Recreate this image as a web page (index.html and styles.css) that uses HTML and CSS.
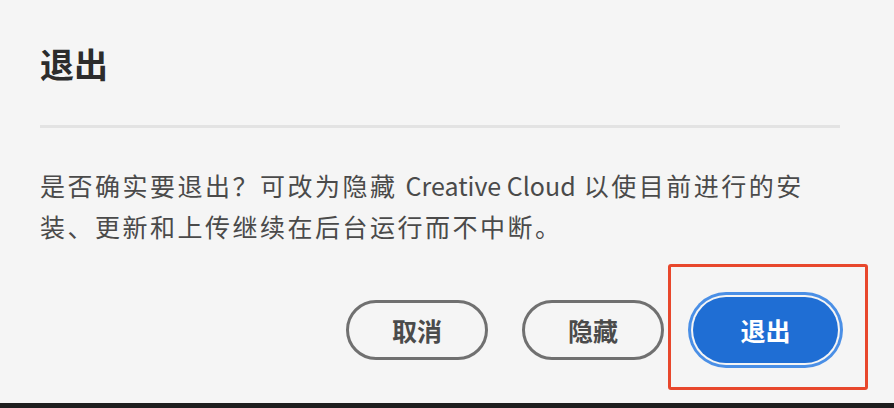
FILE: index.html
```html
<!DOCTYPE html>
<html lang="zh-CN">
<head>
<meta charset="utf-8">
<link rel="stylesheet" href="styles.css">
</head>
<body>
<div class="dialog">
  <h1 class="title">退出</h1>
  <div class="divider"></div>
  <p class="message">是否确实要退出？可改为隐藏 <span class="latin">Creative Cloud</span> 以使目前进行的安装、更新和上传继续在后台运行而不中断。</p>
  <div class="actions">
    <button class="btn btn-outline">取消</button>
    <button class="btn btn-outline">隐藏</button>
    <button class="btn btn-primary">退出</button>
  </div>
  <div class="highlight"></div>
</div>
<div class="bottom-strip"></div>
</body>
</html>
```

FILE: styles.css
```css
* { box-sizing: border-box; }
html, body {
  margin: 0;
  padding: 0;
  background: #f5f5f5;
  width: 894px;
  height: 408px;
  overflow: hidden;
  font-family: "Noto Sans CJK SC", "Noto Sans", sans-serif;
}
.dialog {
  position: relative;
  height: 403px;
  padding: 42px 54px 0 40px;
}
.title {
  margin: 0;
  font-size: 34px;
  line-height: 44px;
  font-weight: 700;
  color: #2c2c2c;
}
.divider {
  margin-top: 39px;
  height: 3px;
  background: #e3e3e3;
}
.message {
  margin: 37px 0 0 0;
  width: 790px;
  font-size: 25px;
  line-height: 41px;
  letter-spacing: 2.5px;
  color: #4a4a4a;
}
.message .latin {
  letter-spacing: 0;
}
.actions {
  display: flex;
  justify-content: flex-end;
  align-items: center;
  gap: 34px;
  margin-top: 50px;
  padding-right: 2px;
}
.btn {
  font-family: "Noto Sans CJK SC", sans-serif;
  font-size: 25px;
  font-weight: 700;
  border-radius: 40px;
  padding: 0;
}
.btn-outline {
  width: 142px;
  height: 60px;
  background: transparent;
  border: 3px solid #707070;
  color: #4b4b4b;
}
.btn-primary {
  width: 145px;
  height: 66px;
  margin-left: -5px;
  background: #1f6ed4;
  border: none;
  color: #ffffff;
  box-shadow: 0 0 0 2px #f5f5f5, 0 0 0 5px #4a8fe6;
}
.highlight {
  position: absolute;
  left: 668px;
  top: 264px;
  width: 200px;
  height: 126px;
  border: 3px solid #e8472c;
  border-radius: 3px;
}
.bottom-strip {
  height: 5px;
  background: #1e1e1e;
}
```
